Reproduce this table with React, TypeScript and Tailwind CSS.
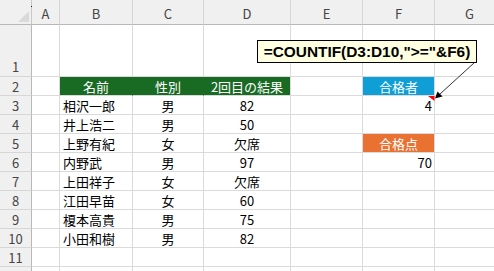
import React from "react";

type Cell = {
  text?: string;
  align?: "left" | "center" | "right";
  fill?: string;
  white?: boolean;
  joinRight?: string;
};

const names = ["相沢一郎", "井上浩二", "上野有紀", "内野武", "上田祥子", "江田早苗", "榎本高貴", "小田和樹"];
const genders = ["男", "男", "女", "男", "女", "女", "男", "男"];
const results = ["82", "50", "欠席", "97", "欠席", "60", "75", "82"];

const cols = ["A", "B", "C", "D", "E", "F", "G"];

function rowCells(r: number): Cell[] {
  const cells: Cell[] = Array.from({ length: 7 }, () => ({}));
  if (r === 2) {
    cells[1] = { text: "名前", align: "center", fill: "bg-[#196b24]", white: true, joinRight: "border-r-[#196b24]" };
    cells[2] = { text: "性別", align: "center", fill: "bg-[#196b24]", white: true, joinRight: "border-r-[#196b24]" };
    cells[3] = { text: "2回目の結果", align: "center", fill: "bg-[#196b24]", white: true };
    cells[5] = { text: "合格者", align: "center", fill: "bg-[#0f9ed5]", white: true };
  }
  if (r >= 3 && r <= 10) {
    const i = r - 3;
    cells[1] = { text: names[i], align: "left" };
    cells[2] = { text: genders[i], align: "center" };
    cells[3] = { text: results[i], align: "center" };
  }
  if (r === 3) cells[5] = { text: "4", align: "right" };
  if (r === 5) cells[5] = { text: "合格点", align: "center", fill: "bg-[#e97132]", white: true };
  if (r === 6) cells[5] = { text: "70", align: "right" };
  return cells;
}

export default function App() {
  const rows = Array.from({ length: 12 }, (_, i) => i + 1);
  return (
    <div className="relative w-[494px] h-[271px] overflow-hidden bg-white font-['Noto_Sans_CJK_JP',sans-serif] text-[13px] leading-none text-black">
      <div className="grid grid-cols-[32px_28px_73px_71px_87px_72px_72px_70px] grid-rows-[25px_52px_repeat(11,19px)]">
        <div className="relative bg-[#f0f0f0] border-r border-b border-r-[#c8c8c8] border-b-[#b8b8b8]">
          <svg className="absolute left-0 top-0" width="32" height="25">
            <polygon points="29,11 29,22 18,22" fill="#d9d9d9" />
            <rect x="31" y="6" width="1" height="1" fill="#222" />
          </svg>
        </div>
        {cols.map((c) => (
          <div
            key={c}
            className="flex items-center justify-center pt-[3px] bg-[#f0f0f0] border-r border-b border-r-[#d6d6d6] border-b-[#b8b8b8] text-[#444] text-[13px]"
          >
            {c}
          </div>
        ))}
        {rows.map((r) => (
          <React.Fragment key={r}>
            <div
              className={`flex justify-center bg-[#f0f0f0] border-r border-b border-r-[#b8b8b8] border-b-[#d6d6d6] text-[#444] text-[13px] ${
                r === 1 ? "items-end pb-[3px]" : "items-center"
              }`}
            >
              {r <= 11 ? r : ""}
            </div>
            {rowCells(r).map((cell, ci) => (
              <div
                key={ci}
                className={`flex items-center border-r border-b border-[#dadada] ${cell.fill ?? ""} ${cell.joinRight ?? ""} ${
                  cell.white ? "text-white" : "text-black"
                } ${
                  cell.align === "left"
                    ? "justify-start pl-[3px]"
                    : cell.align === "right"
                    ? "justify-end pr-[2px]"
                    : "justify-center"
                }`}
              >
                {cell.text}
              </div>
            ))}
          </React.Fragment>
        ))}
      </div>

      <div className="absolute left-[257px] top-[40px] w-[220px] h-[23px] flex items-center justify-center border border-black bg-[#ffffe1] font-['Liberation_Sans',sans-serif] font-bold text-[15.4px] leading-none text-black">
        =COUNTIF(D3:D10,"&gt;="&amp;F6)
      </div>
      <svg className="absolute left-0 top-0 pointer-events-none" width="494" height="271">
        <polygon points="428,96 434.5,96 434.5,101" fill="#ff0000" />
        <line x1="474" y1="63" x2="440" y2="94" stroke="#333" strokeWidth="1" />
        <polygon points="435,98.5 437.5,91.5 442.5,96.5" fill="#000" />
      </svg>
    </div>
  );
}
